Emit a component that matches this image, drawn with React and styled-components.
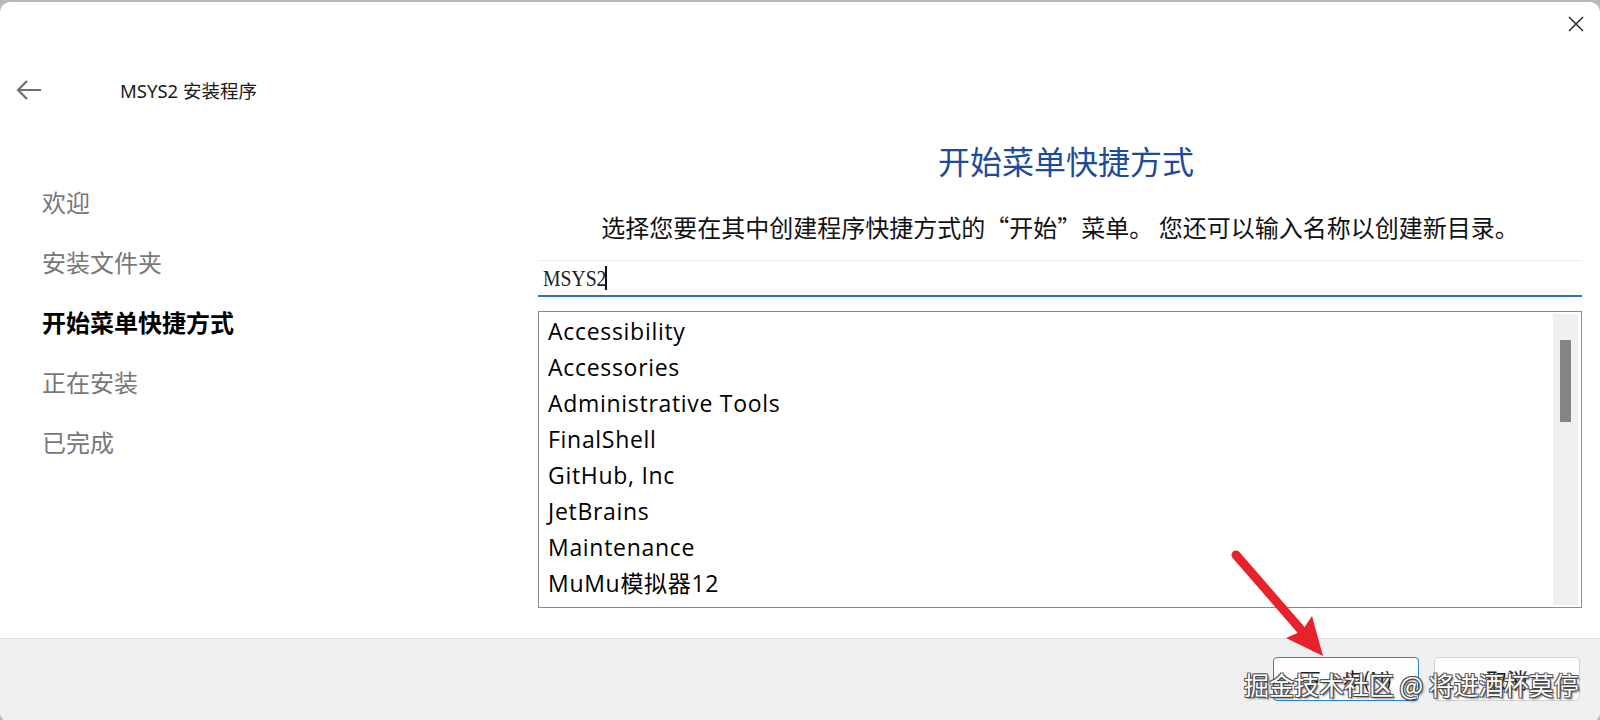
import React from "react";
import styled, { createGlobalStyle } from "styled-components";

const steps = [
  { label: "欢迎" },
  { label: "安装文件夹" },
  { label: "开始菜单快捷方式", active: true },
  { label: "正在安装" },
  { label: "已完成" },
];

const folders = [
  "Accessibility",
  "Accessories",
  "Administrative Tools",
  "FinalShell",
  "GitHub, Inc",
  "JetBrains",
  "Maintenance",
  "MuMu模拟器12",
];

const GlobalStyle = createGlobalStyle`
  html, body {
    margin: 0;
    padding: 0;
    width: 1600px;
    height: 720px;
    overflow: hidden;
    background: #b9b9b9;
  }
  * { box-sizing: border-box; }
`;

export default function App() {
  return (
    <>
      <GlobalStyle />
      <Window>
        <TitleBar>
          <CloseButton aria-label="close">
            <svg width="16" height="16" viewBox="0 0 16 16">
              <path d="M1 1 L15 15 M15 1 L1 15" stroke="#1a1a1a" strokeWidth="1.4" fill="none" />
            </svg>
          </CloseButton>
        </TitleBar>
        <Header>
          <BackButton aria-label="back">
            <svg width="26" height="22" viewBox="0 0 26 22">
              <path d="M25 11 H3 M11 2 L2 11 L11 20" stroke="#6e6e6e" strokeWidth="2.2" fill="none" />
            </svg>
          </BackButton>
          <AppTitle>MSYS2 安装程序</AppTitle>
        </Header>
        <Body>
          <Sidebar>
            {steps.map((s) => (
              <Step key={s.label} $active={s.active}>
                {s.label}
              </Step>
            ))}
          </Sidebar>
          <Content>
            <Heading>开始菜单快捷方式</Heading>
            <Description>
              选择您要在其中创建程序快捷方式的“开始”菜单。 您还可以输入名称以创建新目录。
            </Description>
            <NameInput>
              <InputText>MSYS2</InputText>
              <Caret />
            </NameInput>
            <ListBox>
              <Items>
                {folders.map((f) => (
                  <Item key={f}>{f}</Item>
                ))}
              </Items>
              <ScrollTrack>
                <ScrollThumb />
              </ScrollTrack>
            </ListBox>
          </Content>
        </Body>
        <Footer>
          <Button $primary>下一步(N)</Button>
          <Button>取消</Button>
        </Footer>
      </Window>
      <ArrowMark width="120" height="130" viewBox="0 0 120 130">
        <path d="M16 15 L82 91" stroke="#e8212b" strokeWidth="9" strokeLinecap="round" fill="none" />
        <polygon points="103,116 66,98 82,91 92,76" fill="#e8212b" />
      </ArrowMark>
      <Watermark>掘金技术社区 @ 将进酒杯莫停</Watermark>
    </>
  );
}

const Window = styled.div`
  margin-top: 2px;
  width: 1600px;
  height: 720px;
  background: #ffffff;
  border-radius: 10px;
  overflow: hidden;
  display: flex;
  flex-direction: column;
  font-family: "Noto Sans", "Noto Sans CJK SC", sans-serif;
`;

const TitleBar = styled.div`
  height: 44px;
  display: flex;
  justify-content: flex-end;
  align-items: center;
`;

const CloseButton = styled.div`
  width: 48px;
  height: 44px;
  display: flex;
  align-items: center;
  justify-content: center;
`;

const Header = styled.div`
  height: 88px;
  display: flex;
  align-items: center;
  padding-left: 16px;
`;

const BackButton = styled.div`
  width: 104px;
  display: flex;
  align-items: center;
`;

const AppTitle = styled.div`
  font-size: 18.5px;
  color: #1a1a1a;
  font-family: "Noto Sans", "Noto Sans CJK SC", sans-serif;
`;

const Body = styled.div`
  height: 504px;
  display: flex;
`;

const Sidebar = styled.div`
  width: 538px;
  padding: 38px 0 0 42px;
  display: flex;
  flex-direction: column;
`;

const Step = styled.div`
  height: 60px;
  line-height: 60px;
  font-size: 24px;
  font-family: "Noto Sans CJK SC", sans-serif;
  font-weight: ${(p) => (p.$active ? 700 : 400)};
  color: ${(p) => (p.$active ? "#000000" : "#777777")};
`;

const Content = styled.div`
  flex: 1;
  padding: 6px 18px 0 0;
  display: flex;
  flex-direction: column;
`;

const Heading = styled.div`
  height: 40px;
  line-height: 40px;
  text-align: center;
  font-size: 32px;
  color: #1d4b9c;
  font-family: "Noto Sans CJK SC", sans-serif;
  padding-left: 12px;
`;

const Description = styled.div`
  margin-top: 32px;
  height: 30px;
  line-height: 30px;
  text-align: center;
  font-size: 24px;
  color: #111111;
  font-family: "Noto Sans CJK SC", sans-serif;
  white-space: nowrap;
`;

const NameInput = styled.div`
  margin-top: 18px;
  height: 37px;
  border-top: 1px solid #ececec;
  border-bottom: 2px solid #2f6fbd;
  display: flex;
  align-items: center;
  padding-left: 5px;
`;

const InputText = styled.span`
  display: inline-block;
  font-family: "Liberation Serif", serif;
  font-size: 24px;
  color: #222222;
  transform: scaleX(0.82);
  transform-origin: left center;
  width: 60px;
`;

const Caret = styled.span`
  display: inline-block;
  width: 2px;
  height: 24px;
  margin-left: 2px;
  background: #111111;
`;

const ListBox = styled.div`
  margin-top: 14px;
  height: 297px;
  border: 1px solid #8a8a8a;
  display: flex;
  overflow: hidden;
`;

const Items = styled.div`
  flex: 1;
  padding: 1px 0 0 9px;
  overflow: hidden;
`;

const Item = styled.div`
  height: 36px;
  line-height: 36px;
  font-size: 23px;
  letter-spacing: 0.7px;
  color: #000000;
  font-family: "Open Sans", "Noto Sans CJK SC", sans-serif;
  white-space: nowrap;
`;

const ScrollTrack = styled.div`
  width: 25px;
  margin: 2px 3px 2px 0;
  background: #f0f0f0;
  padding: 26px 0 0 7px;
`;

const ScrollThumb = styled.div`
  width: 11px;
  height: 82px;
  background: #858585;
`;

const Footer = styled.div`
  flex: 1;
  background: #f0f0f0;
  border-top: 1px solid #e1e1e1;
  display: flex;
  justify-content: flex-end;
  align-items: flex-start;
  gap: 15px;
  padding: 18px 20px 0 0;
`;

const Button = styled.div`
  width: 146px;
  height: 44px;
  border-radius: 4px;
  background: #fdfdfd;
  border: 1px solid ${(p) => (p.$primary ? "#2b7fd4" : "#d3d3d3")};
  display: flex;
  align-items: center;
  justify-content: center;
  font-size: 21px;
  color: #1b1b1b;
  font-family: "Noto Sans CJK SC", sans-serif;
`;

const ArrowMark = styled.svg`
  position: absolute;
  left: 1220px;
  top: 540px;
`;

const Watermark = styled.div`
  position: absolute;
  left: 1244px;
  top: 666px;
  font-size: 25px;
  line-height: 36px;
  white-space: nowrap;
  color: #ffffff;
  font-family: "Noto Sans CJK SC", sans-serif;
  text-shadow: 1px 1px 0 #444, -1px -1px 0 #555, 1px -1px 0 #555, -1px 1px 0 #555, 2px 2px 2px rgba(0, 0, 0, 0.5);
`;
